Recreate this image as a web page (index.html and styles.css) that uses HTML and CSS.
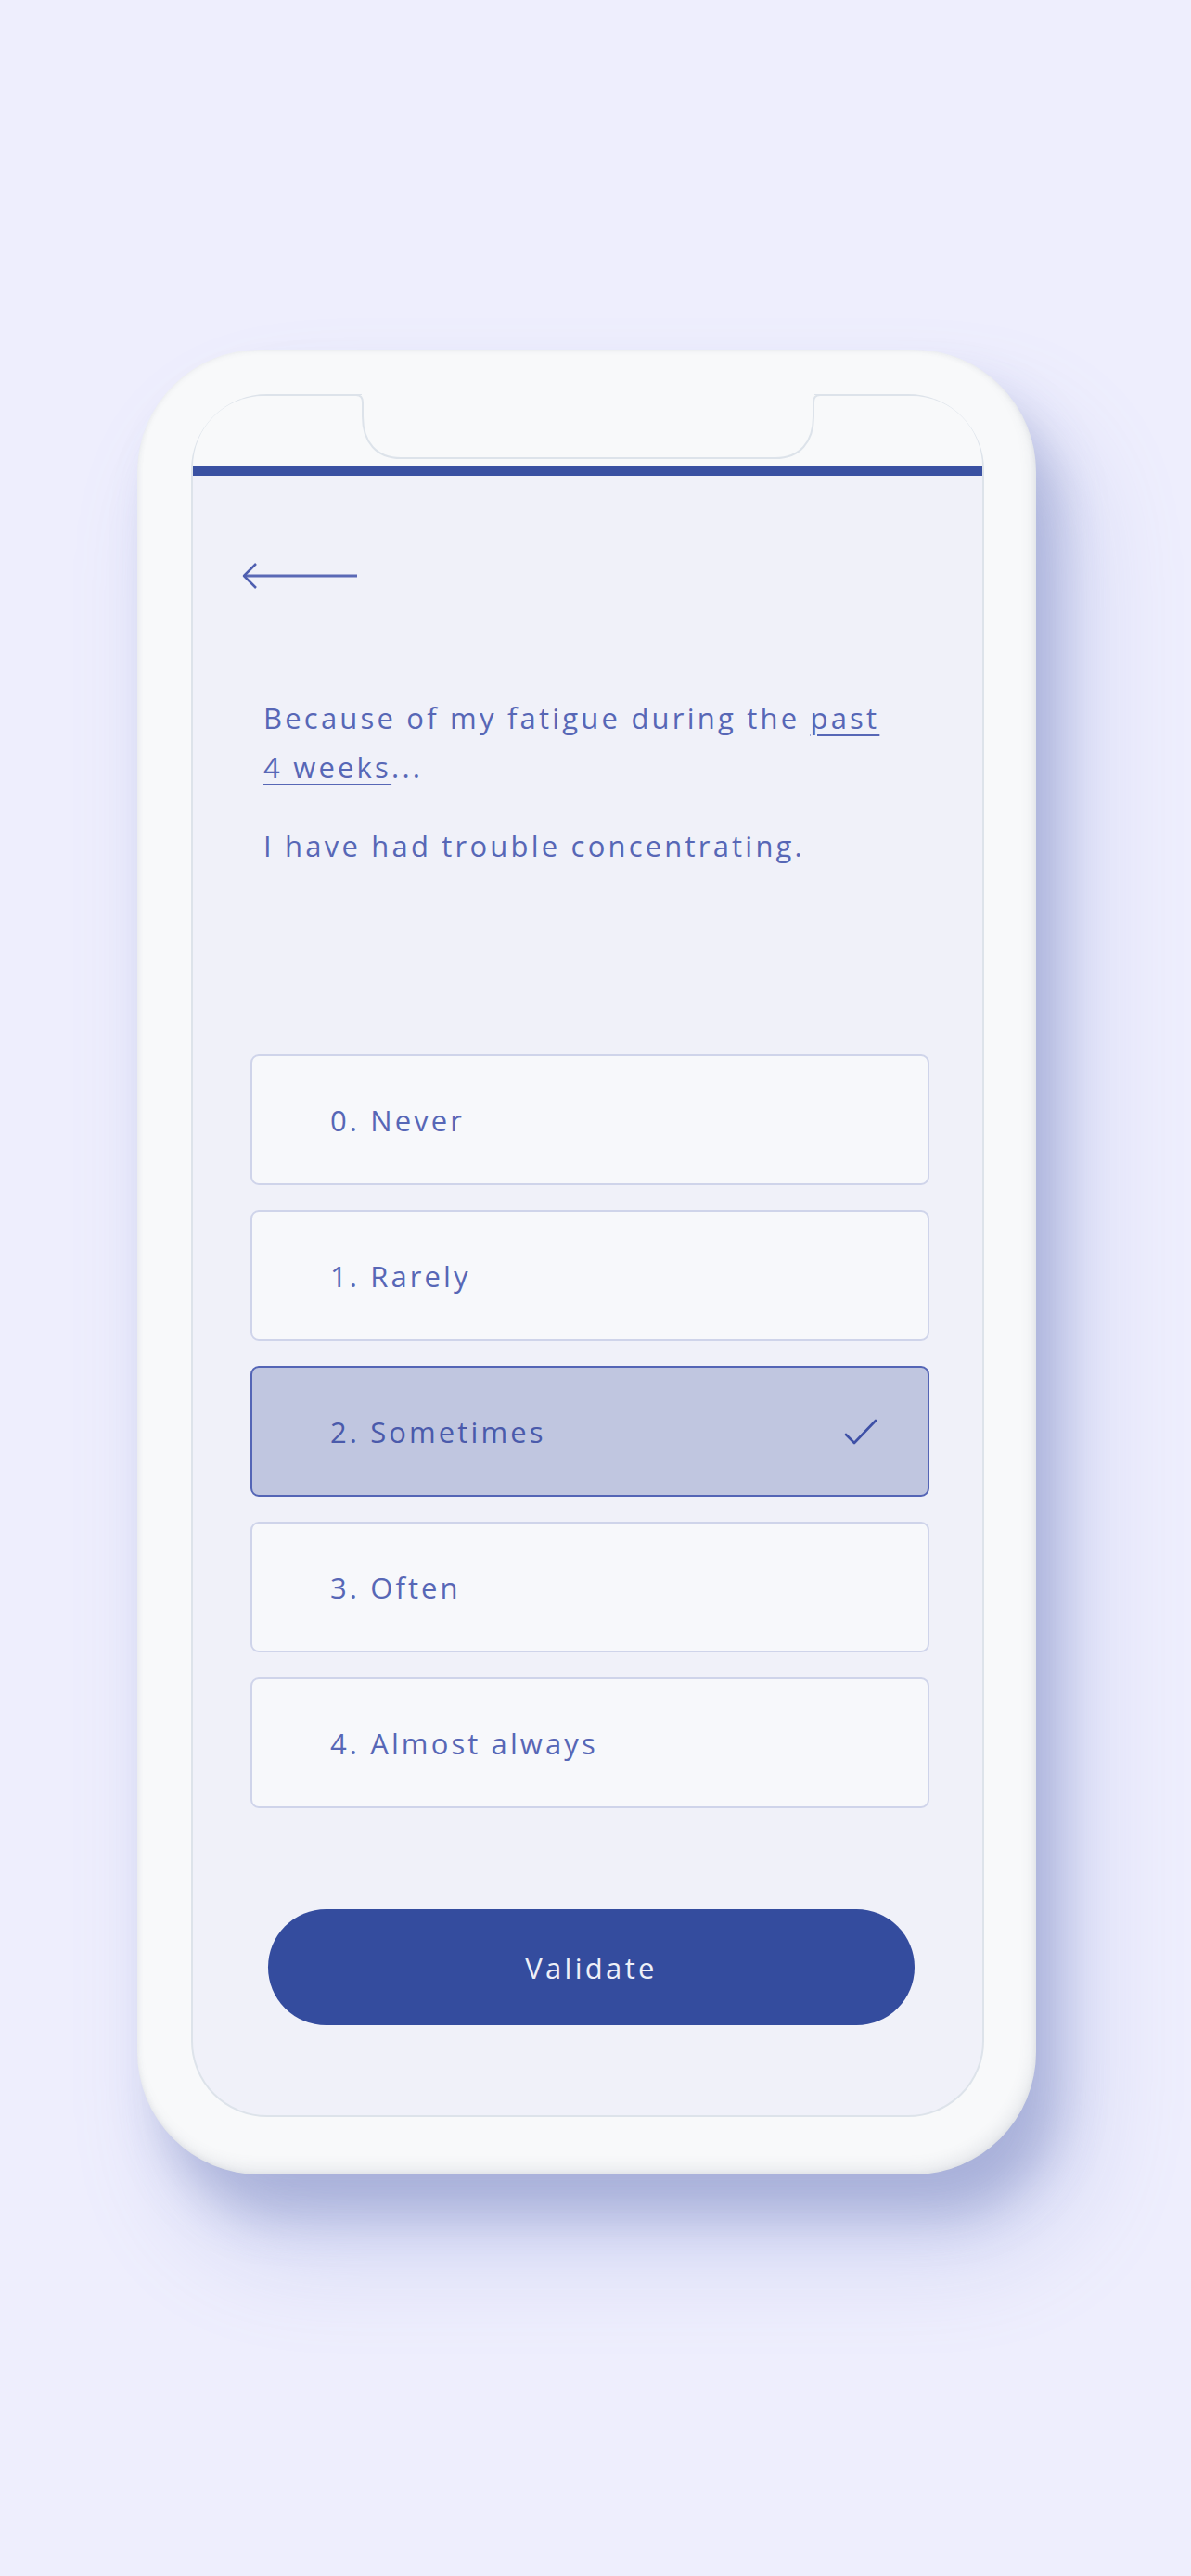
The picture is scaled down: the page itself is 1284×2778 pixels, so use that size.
FILE: index.html
```html
<!DOCTYPE html>
<html lang="en">
<head>
    <meta charset="UTF-8">
    <meta name="viewport" content="width=device-width, initial-scale=1.0">
    <title>Fatigue Questionnaire</title>
    <link rel="stylesheet" href="styles.css">
</head>
<body>
    <div class="phone">
        <div class="screen">
            <div class="status-bar">
                <svg class="notch" width="500" height="72" viewBox="0 0 500 72">
                    <rect x="6" y="0" width="488" height="4" fill="#f8f9fa"/>
                    <path d="M0 1 Q7 1 7 9 V24 C7 52 22 69 48 69 H452 C478 69 493 52 493 24 V9 Q493 1 500 1" fill="#f8f9fa" stroke="#dde3ea" stroke-width="2"/>
                </svg>
            </div>
            <div class="progress"></div>

            <div class="content">
                <button class="back-btn" aria-label="Back">
                    <svg width="126" height="30" viewBox="0 0 126 30">
                        <path d="M2 15 H124" stroke="#5a69b6" stroke-width="3" fill="none"/>
                        <path d="M15 2 L2 15 L15 28" stroke="#4f5fb0" stroke-width="2.5" fill="none" stroke-linejoin="round"/>
                    </svg>
                </button>

                <div class="question">
                    <p>Because of my fatigue during the <u>past</u> <u>4 weeks</u>...</p>
                    <p>I have had trouble concentrating.</p>
                </div>

                <ul class="answers">
                    <li class="answer">0. Never</li>
                    <li class="answer">1. Rarely</li>
                    <li class="answer selected">
                        2. Sometimes
                        <svg class="check" width="36" height="28" viewBox="0 0 36 28">
                            <path d="M2 17 L11 26 L34 2" stroke="#3e50a6" stroke-width="2.6" fill="none" stroke-linecap="round" stroke-linejoin="round"/>
                        </svg>
                    </li>
                    <li class="answer">3. Often</li>
                    <li class="answer">4. Almost always</li>
                </ul>

                <button class="validate">Validate</button>
            </div>
        </div>
    </div>
</body>
</html>
```

FILE: styles.css
```css
* {
    padding: 0;
    margin: 0;
    box-sizing: border-box;
}

body {
    font-family: 'Open Sans', 'Liberation Sans', sans-serif;
    background-color: #eeeefd;
    min-height: 2778px;
    padding: 377px 0 0 148px;
    color: #5767b6;
}

.phone {
    width: 969px;
    height: 1968px;
    padding: 48px 56px 62px 58px;
    border-radius: 132px;
    background-color: #f8f9fa;
    box-shadow:
        inset 0 0 6px rgba(90, 100, 120, 0.12),
        inset -5px -9px 14px rgba(90, 100, 120, 0.09),
        25px 45px 50px rgba(100, 115, 175, 0.35),
        45px 80px 110px rgba(130, 145, 215, 0.3);
}

.screen {
    height: 100%;
    border: 2px solid #dde3ea;
    border-radius: 82px;
    background-color: #f0f1f9;
    display: flex;
    flex-direction: column;
}

.status-bar {
    height: 76px;
    background-color: #f8f9fa;
    border-radius: 80px 80px 0 0;
    display: flex;
    justify-content: center;
}

.notch {
    display: block;
    margin-top: -2px;
}

.progress {
    height: 10px;
    background-color: #3a51a2;
}

.content {
    flex: 1;
    display: flex;
    flex-direction: column;
}

.back-btn {
    background: none;
    border: none;
    width: 126px;
    height: 30px;
    margin: 93px 0 0 53px;
    cursor: pointer;
}

.back-btn svg {
    display: block;
}

.question {
    margin: 112px 0 0 76px;
    width: 685px;
    font-size: 31px;
    line-height: 53px;
    letter-spacing: 3.2px;
}

.question p + p {
    margin-top: 32px;
}

.question u {
    text-decoration-thickness: 2px;
    text-underline-offset: 6px;
}

.answers {
    list-style: none;
    margin: 198px 57px 0 62px;
    display: flex;
    flex-direction: column;
    gap: 27px;
}

.answer {
    height: 141px;
    padding: 0 54px 0 84px;
    border: 2px solid #cfd4ea;
    border-radius: 9px;
    background-color: #f7f8fb;
    font-size: 31px;
    letter-spacing: 3.1px;
    display: flex;
    align-items: center;
    justify-content: space-between;
}

.answer.selected {
    background-color: #c0c6e0;
    border-color: #5465b6;
    color: #4a5aab;
}

.validate {
    width: 697px;
    height: 125px;
    margin: 109px 0 0 81px;
    border: none;
    border-radius: 63px;
    background-color: #344c9e;
    color: #eef0f8;
    font-family: inherit;
    font-size: 31px;
    letter-spacing: 3.3px;
    cursor: pointer;
}
```
